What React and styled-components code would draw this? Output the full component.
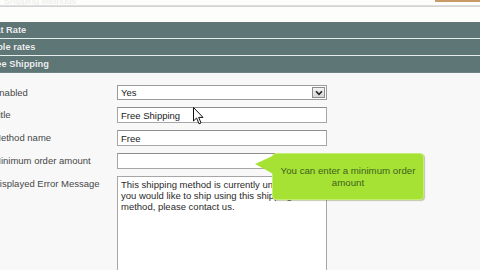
import React from "react";
import styled, { createGlobalStyle } from "styled-components";

const GlobalStyle = createGlobalStyle`
    html, body {
        margin: 0;
        padding: 0;
        background: #f8f8f8;
        overflow: hidden;
    }
    body{
        font-family: "Liberation Sans", Arial, sans-serif;
    }
`;

const sections = ["Flat Rate", "Table rates", "Free Shipping"];

const errorText =
    "This shipping method is currently unavailable. If\nyou would like to ship using this shipping\nmethod, please contact us.";

const App = () => {
    return (
        <>
        <GlobalStyle />
        <Page>
            <TopStrip>
                <Crumb>Shipping Methods</Crumb>
                <OrangeTab />
            </TopStrip>
            <Rule />
            <TopSpace />
            {sections.map((s, i) => (
                <SectionBar key={s} last={i === sections.length - 1}>{s}</SectionBar>
            ))}
            <Form>
                <Label>Enabled</Label>
                <SelectBox>
                    <span>Yes</span>
                    <ArrowBtn>
                        <svg width="8" height="6" viewBox="0 0 8 6">
                            <path d="M1 1.2 L4 4.4 L7 1.2" fill="none" stroke="#222" strokeWidth="1.6" />
                        </svg>
                    </ArrowBtn>
                </SelectBox>

                <Label>Title</Label>
                <TextInput defaultValue="Free Shipping" />

                <Label>Method name</Label>
                <TextInput defaultValue="Free" />

                <Label>Minimum order amount</Label>
                <TextInput defaultValue="" />

                <Label>Displayed Error Message</Label>
                <TextArea defaultValue={errorText} wrap="off" />
            </Form>

            <Tip>You can enter a minimum order amount</Tip>

            <Cursor width="11" height="18" viewBox="0 0 11 18">
                <path d="M0.5 0.5 L0.5 14 L3.6 11 L6 16.8 L8 15.9 L5.7 10.4 L10 10.4 Z"
                    fill="#fff" stroke="#111" strokeWidth="1" strokeLinejoin="round" />
            </Cursor>
        </Page>
        </>
    );
};

export default App;

const Page = styled.div`
    position: relative;
    width: 480px;
    height: 270px;
    overflow: hidden;
    display: flex;
    flex-direction: column;
    background: #f8f8f8;

    & > *{
        flex-shrink: 0;
    }
`;
const TopStrip = styled.div`
    height: 5px;
    background: #fdfdfb;
    display: flex;
    justify-content: space-between;
    align-items: flex-start;
    overflow: hidden;
`;
const Crumb = styled.div`
    font-size: 9px;
    line-height: 2px;
    color: #ecece8;
    padding-left: 4px;
`;
const OrangeTab = styled.div`
    width: 45px;
    height: 2px;
    background: #c99a68;
`;
const Rule = styled.div`
    height: 2px;
    background: linear-gradient(#e2e2e2, #cfcfcf);
`;
const TopSpace = styled.div`
    height: 15px;
    background: #fdfdfb;
`;
const SectionBar = styled.div`
    height: 16px;
    line-height: 16px;
    background: #5f7677;
    border-bottom: 1px solid ${p => p.last ? "#6e8283" : "#e6eded"};
    color: #eef1f1;
    font-size: 9.3px;
    font-weight: bold;
    text-indent: -13px;
    white-space: nowrap;
    text-shadow: 0 0 1px rgba(0,0,0,.25);
`;
const Form = styled.div`
    display: grid;
    grid-template-columns: 117px 210px;
    row-gap: 7px;
    padding-top: 12px;
    align-items: start;
`;
const Label = styled.div`
    font-size: 9.5px;
    line-height: 15px;
    color: #474747;
    text-indent: -7px;
    white-space: nowrap;
`;
const SelectBox = styled.div`
    box-sizing: border-box;
    height: 15px;
    border: 1px solid #9a9a9a;
    background: #fff;
    display: flex;
    align-items: center;
    justify-content: space-between;
    padding-left: 3px;
    font-size: 9.5px;
    color: #222;
`;
const ArrowBtn = styled.div`
    box-sizing: border-box;
    width: 13px;
    height: 11px;
    margin-right: 1px;
    border: 1px solid #8c8c8c;
    background: linear-gradient(#f4f4f4, #d6d6d6);
    display: flex;
    align-items: center;
    justify-content: center;
`;
const TextInput = styled.input`
    box-sizing: border-box;
    width: 210px;
    height: 16px;
    margin: 0;
    border: 1px solid #a6a6a6;
    border-top-color: #8e8e8e;
    background: #fff;
    padding: 0 3px;
    font-family: "Liberation Sans", Arial, sans-serif;
    font-size: 9.5px;
    color: #222;
    outline: none;
`;
const TextArea = styled.textarea`
    box-sizing: border-box;
    width: 210px;
    height: 110px;
    margin: 0;
    border: 1px solid #a6a6a6;
    background: #fff;
    padding: 2px 3px;
    font-family: "Liberation Sans", Arial, sans-serif;
    font-size: 9.5px;
    line-height: 11px;
    color: #2a2a2a;
    resize: none;
    overflow: hidden;
    white-space: pre;
    outline: none;
`;
const Tip = styled.div`
    position: absolute;
    left: 272px;
    top: 153px;
    box-sizing: border-box;
    width: 152px;
    height: 47px;
    padding: 0 2px;
    display: flex;
    align-items: center;
    justify-content: center;
    text-align: center;
    background: #a6e234;
    border: 1px solid #c4ee72;
    border-radius: 4px;
    box-shadow: 1px 1px 1px rgba(90,110,40,.35);
    color: #3f5f22;
    font-size: 9.7px;
    line-height: 11.5px;

    &::before{
        content: "";
        position: absolute;
        left: -18px;
        top: 0;
        width: 22px;
        height: 24px;
        background: #a6e234;
        clip-path: polygon(0 10px, 22px 0, 22px 22px);
    }
`;
const Cursor = styled.svg`
    position: absolute;
    left: 193px;
    top: 107px;
`;
